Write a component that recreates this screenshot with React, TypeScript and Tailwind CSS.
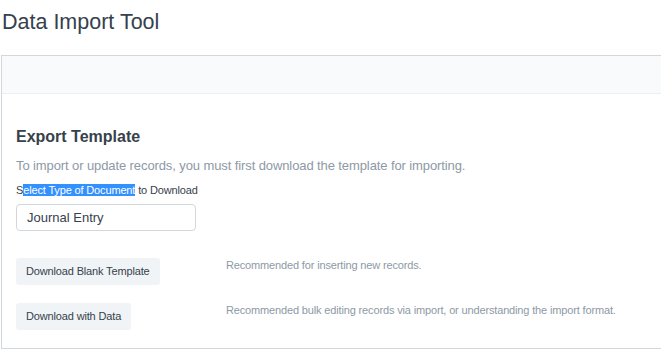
export default function App() {
  return (
    <div className="min-h-screen bg-white text-[#36414c] font-['Liberation_Sans',Arial,sans-serif]">
      <div className="h-[55px] pl-[2px] pt-[9px]">
        <h1 className="text-[21.5px] leading-[26px] text-[#36414c]">Data Import Tool</h1>
      </div>
      <div className="ml-[1px] border-l border-t border-b border-[#d1d8dd] h-[294px]">
        <div className="h-[38px] bg-[#f8fafc] border-b border-[#ebeff2]"></div>
        <div className="pl-[14px] pt-[33px]">
          <h2 className="text-[16px] leading-[20px] font-bold text-[#36414c]">Export Template</h2>
          <p className="mt-[10px] text-[13px] tracking-[-0.1px] leading-[18px] text-[#8d99a6]">
            To import or update records, you must first download the template for importing.
          </p>
          <div className="mt-[8px] text-[11px] tracking-[-0.15px] leading-[15px] text-[#36414c]">
            S<span className="bg-[#3390ff] text-white">elect Type of Document</span> to Download
          </div>
          <div className="mt-[6px] w-[180px] h-[27px] border border-[#d1d8dd] rounded-[4px] px-[10px] flex items-center text-[13px] text-[#36414c]">
            Journal Entry
          </div>
          <div className="mt-[27px] flex items-center">
            <div className="w-[210px]">
              <button className="h-[27px] px-[10px] bg-[#f0f4f7] rounded-[3px] text-[11px] tracking-[-0.15px] text-[#36414c]">
                Download Blank Template
              </button>
            </div>
            <span className="text-[11px] tracking-[-0.15px] text-[#8d99a6] -mt-[12px] whitespace-nowrap">
              Recommended for inserting new records.
            </span>
          </div>
          <div className="mt-[18px] flex items-center">
            <div className="w-[210px]">
              <button className="h-[27px] px-[10px] bg-[#f0f4f7] rounded-[3px] text-[11px] tracking-[-0.15px] text-[#36414c]">
                Download with Data
              </button>
            </div>
            <span className="text-[11px] tracking-[-0.15px] text-[#8d99a6] -mt-[12px] whitespace-nowrap">
              Recommended bulk editing records via import, or understanding the import format.
            </span>
          </div>
        </div>
      </div>
    </div>
  );
}
